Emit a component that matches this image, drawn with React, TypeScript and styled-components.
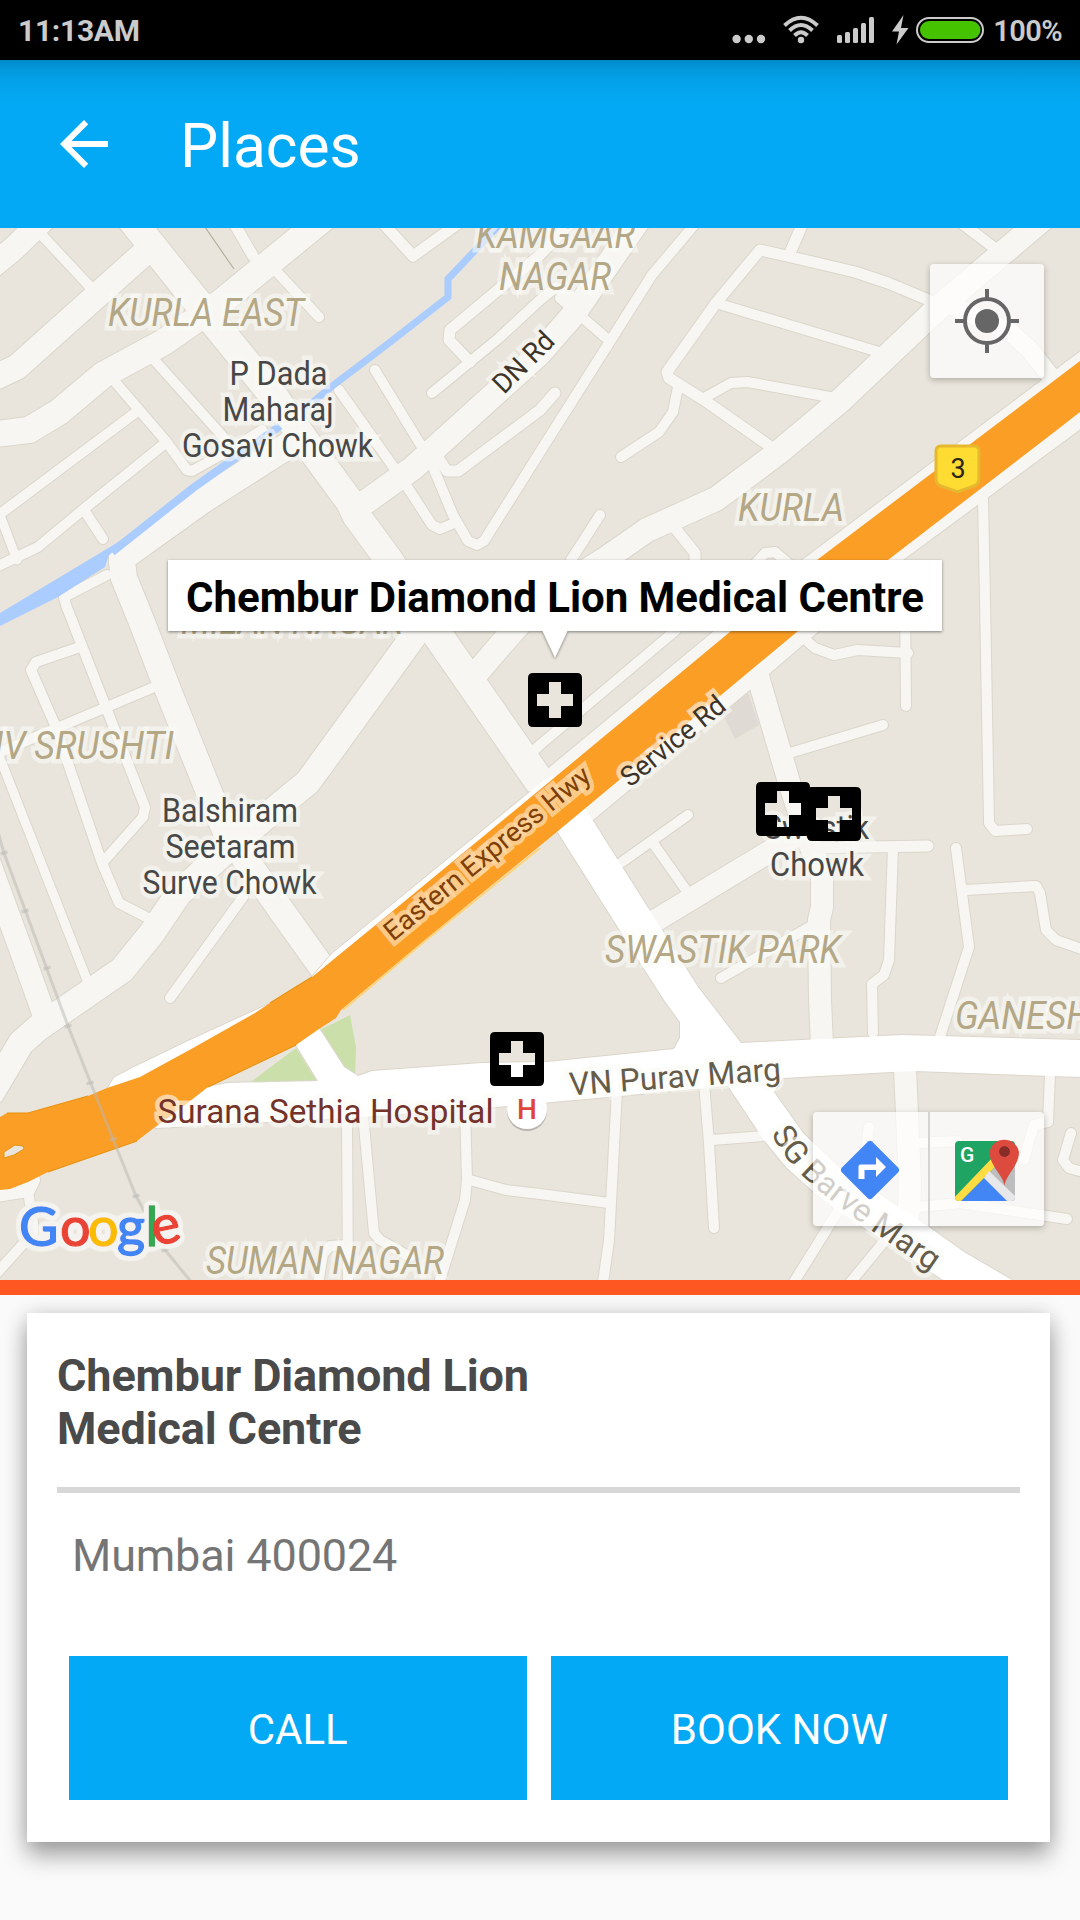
import React from "react";
import styled, { createGlobalStyle } from "styled-components";

const GlobalStyle = createGlobalStyle`
  html, body { margin: 0; padding: 0; }
  body { background: #fafafa; }
  *, *::before, *::after { box-sizing: border-box; }
`;

const Screen = styled.div`
  width: 1080px;
  height: 1920px;
  display: flex;
  flex-direction: column;
  background: #fafafa;
  font-family: Roboto, "Liberation Sans", sans-serif;
  overflow: hidden;
`;

/* ---------- status bar ---------- */

const StatusBar = styled.header`
  flex: none;
  height: 60px;
  padding: 0 18px;
  display: flex;
  align-items: center;
  justify-content: space-between;
  background: #000;
  color: #cbcbcb;
`;

const Clock = styled.span`
  padding-top: 1px;
  font-size: 30px;
  line-height: 36px;
  font-weight: 700;
  letter-spacing: -0.3px;
`;

const Indicators = styled.div`
  display: flex;
  align-items: center;
  height: 60px;
`;

const StatusIcons = styled.svg`
  display: block;
  width: 260px;
  height: 60px;
`;

const Percent = styled.span`
  padding-top: 1px;
  font-size: 29px;
  line-height: 34px;
  font-weight: 600;
  width: 72px;
  text-align: right;
  white-space: nowrap;
  letter-spacing: -0.6px;
`;

/* ---------- toolbar ---------- */

const Toolbar = styled.nav`
  flex: none;
  height: 168px;
  padding: 0 48px;
  display: flex;
  align-items: center;
  gap: 60px;
  background: linear-gradient(
      to bottom,
      rgba(0, 0, 0, 0.18) 0,
      rgba(0, 0, 0, 0.1) 9px,
      rgba(0, 0, 0, 0.04) 22px,
      rgba(0, 0, 0, 0) 44px
    ),
    #03a9f4;
`;

const BackButton = styled.button`
  width: 72px;
  height: 72px;
  padding: 0;
  border: 0;
  background: none;
  svg { display: block; }
`;

const Title = styled.h1`
  margin: 0;
  padding-top: 5px;
  color: #fff;
  font-size: 60.5px;
  line-height: 70px;
  font-weight: 400;
`;

/* ---------- map ---------- */

const MapArea = styled.section`
  position: relative;
  flex: none;
  height: 1052px;
  overflow: hidden;
  background: #e9e5dc;
`;

const MapDrawing = styled.svg`
  display: block;
  width: 1080px;
  height: 1052px;
  font-family: Roboto, "Liberation Sans", sans-serif;
`;

const Label = styled.text<{ $size: number; $color: string; $halo?: string; $italic?: boolean }>`
  font-size: ${(p) => p.$size}px;
  font-style: ${(p) => (p.$italic ? "italic" : "normal")};
  fill: ${(p) => p.$color};
  stroke: ${(p) => p.$halo ?? "rgba(250, 250, 246, 0.6)"};
  stroke-width: 9px;
  paint-order: stroke;
`;

const PlaceMarker = styled.svg<{ $x: number; $y: number }>`
  position: absolute;
  left: ${(p) => p.$x}px;
  top: ${(p) => p.$y}px;
  width: 54px;
  height: 54px;
`;

const Callout = styled.div`
  position: absolute;
  left: 168px;
  top: 332px;
  width: 774px;
  height: 71px;
  padding-top: 4px;
  display: flex;
  align-items: center;
  justify-content: center;
  background: #fff;
  filter: drop-shadow(0 1px 1.5px rgba(0, 0, 0, 0.45));
  color: #000;
  font-size: 42px;
  line-height: 50px;
  font-weight: 700;
  white-space: nowrap;
  letter-spacing: -0.03px;

  &::after {
    content: "";
    position: absolute;
    left: 374px;
    top: 70px;
    border: 13px solid transparent;
    border-top: 28px solid #fff;
    border-bottom: 0;
  }
`;

const Controls = styled.div<{ $top: number; $width: number }>`
  position: absolute;
  right: 36px;
  top: ${(p) => p.$top}px;
  width: ${(p) => p.$width}px;
  height: 114px;
  display: flex;
  border-radius: 4px;
  background: rgba(255, 255, 255, 0.7);
  box-shadow: 0 2px 6px rgba(0, 0, 0, 0.25);
`;

const ControlButton = styled.button`
  flex: 1;
  padding: 0;
  border: 0;
  background: none;
  & + & { border-left: 2px solid #d3d2d0; }
  svg { display: block; margin: auto; }
`;

/* ---------- details ---------- */

const Accent = styled.div`
  flex: none;
  height: 15px;
  background: #ff5722;
`;

const Details = styled.main`
  flex: 1;
  padding: 18px 30px 78px 27px;
  display: flex;
  overflow: hidden;
`;

const Card = styled.article`
  flex: 1;
  display: flex;
  flex-direction: column;
  padding: 36px 30px 42px;
  background: #fff;
  box-shadow: 0 14px 22px rgba(0, 0, 0, 0.32), 0 0 20px rgba(0, 0, 0, 0.14);
`;

const PlaceName = styled.h2`
  margin: 0;
  width: 500px;
  color: #4a4a4a;
  font-size: 45px;
  line-height: 53px;
  font-weight: 700;
  letter-spacing: -0.12px;
`;

const Divider = styled.hr`
  width: 963px;
  height: 6px;
  margin: 32px 0 0;
  border: 0;
  background: #d8d8d8;
`;

const Address = styled.p`
  margin: 36px 0 0 15px;
  color: #757575;
  font-size: 45px;
  line-height: 54px;
  letter-spacing: -0.15px;
`;

const Actions = styled.div`
  margin: auto 12px 0;
  display: flex;
  gap: 24px;
`;

const ActionButton = styled.button`
  flex: 1;
  height: 144px;
  padding: 4px 0 0;
  border: 0;
  background: #03a9f4;
  color: #fff;
  font-family: inherit;
  font-size: 42px;
  line-height: 50px;
  font-weight: 400;
`;

/* ---------- map data ---------- */

type Road = [width: number, d: string];

const roads: Road[] = [
  [24, "M-10 268L12 250L45 218"],
  [10, "M38 231L94 291"],
  [25, "M150 248L17 367L-4 377"],
  [28, "M130 218L215 324L275 398L306 442L350 502L356 515L389 560L439 637"],
  [30, "M430 622L439 637L535 775L560 810"],
  [26, "M323 219L220 303L164 342L103 375L59 412L29 430L-4 434"],
  [11, "M231 218L253 256"],
  [10, "M277 272L319 317"],
  [11, "M380 220L413 256L463 220"],
  [24, "M360 506L413 468L540 353L573 315L640 218"],
  [11, "M577 216L540 255L450 330L449 340L470 362"],
  [10, "M432 393L499 338L540 300L556 287L575 298"],
  [10, "M560 298L605 337"],
  [10, "M375 370L425 452"],
  [10, "M339 390L397 472"],
  [11, "M434 452L447 471L458 471L540 410L555 393"],
  [10, "M406 485L432 525L440 529L452 524"],
  [10, "M430 460L453 515L468 541L477 545L484 541L540 452L652 275L700 218"],
  [10, "M148 353L226 440"],
  [10, "M110 376L165 440L187 470L192 471L235 447L262 430"],
  [10, "M135 413L0 514"],
  [10, "M163 445L85 508L38 547L-4 567"],
  [10, "M86 513L103 539"],
  [9, "M0 515L17 560"],
  [26, "M300 438L203 500L122 558"],
  [26, "M122 562L124 578L143 625L168 690L207 787L225 830L281 910L326 973"],
  [10, "M107 575L64 597L66 605L107 710L145 807L143 817L103 862"],
  [10, "M77 648L36 662L31 670L55 725L102 863L119 903L148 918"],
  [10, "M152 688L52 730L-4 754"],
  [9, "M0 758L89 985"],
  [23, "M-12 860L21 950L46 1020"],
  [26, "M433 606L413 637L308 782L241 837L179 893L152 933L122 970L38 1028L21 1043L-8 1092"],
  [10, "M243 897L170 998"],
  [24, "M1044 218L939 307L841 400L779 452L716 499L647 530L604 560L540 600L505 640L475 675"],
  [11, "M716 303L667 372L669 378L704 400L771 447"],
  [11, "M716 303L760 250L791 257L855 272L888 283L936 303"],
  [11, "M805 218L790 253"],
  [10, "M716 303L879 352"],
  [10, "M704 398L731 383L748 382L835 398"],
  [10, "M678 387L673 412L659 432L621 457"],
  [11, "M955 218L997 250"],
  [18, "M955 307L1010 332L1030 350L1052 378"],
  [10, "M600 515L571 560"],
  [11, "M674 527L695 553L695 565"],
  [10, "M755 564L765 553L775 552L788 563"],
  [10, "M983 498L985 600L989 823L995 831L1027 829"],
  [22, "M753 655L759 680L789 782L809 843L822 873L822 907L819 920L820 1000L822 1045"],
  [10, "M793 752L883 725"],
  [11, "M809 848L928 846"],
  [22, "M653 922L807 829"],
  [10, "M622 862L688 815"],
  [10, "M653 843L686 890"],
  [10, "M813 925L721 978"],
  [10, "M893 847L889 960L884 975L872 984L873 1033"],
  [10, "M956 848L969 947L939 1040"],
  [10, "M965 890L1036 886L1040 893L1046 930L1056 940L1090 952"],
  [10, "M905 600L906 706"],
  [10, "M800 635L815 648L834 655L858 650L908 653"],
  [10, "M676 630L541 744L530 754"],
  [10, "M617 1090L611 1203L609 1240L602 1290"],
  [10, "M465 1108L467 1180L465 1200L437 1290"],
  [10, "M470 1180L506 1190L540 1194L609 1203"],
  [10, "M704 1083L709 1143L714 1228"],
  [10, "M712 1140L764 1136"],
  [22, "M905 1068L910 1183L909 1210L905 1228"],
  [10, "M919 1143L957 1141"],
  [10, "M919 1207L960 1203L1067 1219"],
  [10, "M869 1127L865 1155"],
  [10, "M1050 1075L1048 1122L1034 1125L1030 1138L1024 1160"],
  [10, "M1071 1133L1063 1160L1069 1168L1090 1174"],
  [10, "M840 1208L789 1290"],
  [10, "M887 1238L844 1290"],
  [10, "M347 1117L348 1290"],
  [10, "M363 1115L374 1233L380 1240L410 1257"],
  [10, "M348 1245L330 1246L323 1254L317 1290"],
  [14, "M33 1180L28 1190L-4 1195"],
  [10, "M27 1185L33 1223L33 1233L-4 1274"],
];

const highwaySides =
  "M1082 350L802 560L714 631L551 766L530 790L560 785L817 570L1082 380ZM1082 428L903 560L812 637L769 674L593 820L580 812L798 625L1082 400Z";
const highway =
  "M1080 361L817 560L731 631L560 773L400 905L312 977L294 988L270 1003L255 1013L193 1048L140 1077L107 1088L88 1096L28 1113L7 1113L0 1117L0 1190L10 1189L28 1182L48 1172L137 1141L155 1127L185 1105L208 1087L296 1045L319 1029L336 1018L341 1010L425 940L558 831L798 631L888 560L1053 433L1080 412Z";
const sideRoad =
  "M557 831L643 967L664 1000L680 1022L680 1038L674 1049L547 1062L482 1063L372 1071L358 1076L344 1067L319 1028L296 1045L318 1081L227 1083L208 1087L155 1128L362 1117L496 1107L728 1086L764 1140L786 1167L815 1193L834 1208L943 1280L1012 1280L964 1252L929 1227L840 1168L803 1133L774 1092L783 1078L891 1072L915 1071L1080 1077L1080 1040L902 1035L741 1043L698 987L684 965L662 930L585 808Z";

const railTicks: [number, number][] = [
  [4, 853], [25, 911], [47, 968], [68, 1026], [90, 1083], [113, 1139], [136, 1196], [165, 1250],
];

const tan = "#b3a785";
const ink = "#474747";

interface LabelSpec {
  text: string;
  x: number;
  y: number;
  length: number;
  size: number;
  color: string;
  italic?: boolean;
  angle?: number;
  halo?: string;
}

const labels: LabelSpec[] = [
  { text: "KURLA EAST", x: 108, y: 325.5, length: 196, size: 38, color: tan, italic: true },
  { text: "KAMGAAR", x: 476, y: 247.5, length: 159, size: 38, color: tan, italic: true },
  { text: "NAGAR", x: 499, y: 290, length: 112, size: 38, color: tan, italic: true },
  { text: "KURLA", x: 738, y: 520.5, length: 106, size: 38, color: tan, italic: true },
  { text: "MILAN NAGAR", x: 181, y: 634, length: 222, size: 38, color: tan, italic: true },
  { text: "IV SRUSHTI", x: -6, y: 758.5, length: 180, size: 38, color: tan, italic: true },
  { text: "SWASTIK PARK", x: 605, y: 963, length: 236, size: 38, color: tan, italic: true },
  { text: "GANESH", x: 955, y: 1029, length: 136, size: 38, color: tan, italic: true },
  { text: "SUMAN NAGAR", x: 206, y: 1273.5, length: 238, size: 38, color: tan, italic: true },
  { text: "P Dada", x: 229.5, y: 385, length: 98, size: 34, color: ink },
  { text: "Maharaj", x: 222.5, y: 421, length: 111, size: 34, color: ink },
  { text: "Gosavi Chowk", x: 182, y: 457, length: 191, size: 34, color: ink },
  { text: "Balshiram", x: 162, y: 822, length: 136, size: 34, color: ink },
  { text: "Seetaram", x: 165.5, y: 858, length: 130, size: 34, color: ink },
  { text: "Surve Chowk", x: 142.5, y: 894, length: 174, size: 34, color: ink },
  { text: "Swastik", x: 764, y: 839, length: 105, size: 34, color: ink },
  { text: "Chowk", x: 770, y: 876, length: 94, size: 34, color: ink },
  { text: "Surana Sethia Hospital", x: 157.5, y: 1122.5, length: 336, size: 34, color: "#73332b" },
  { text: "VN Purav Marg", x: 570, y: 1095.5, length: 212, size: 32, color: "#665c4a", angle: -4.2 },
  { text: "Service Rd", x: 630, y: 788, length: 126, size: 28, color: "#3d3328", angle: -39 },
  { text: "Eastern Express Hwy", x: 393, y: 942, length: 258, size: 27, color: "#7d3f05", angle: -39.3, halo: "rgba(253, 217, 170, 0.75)" },
  { text: "DN Rd", x: 504, y: 395, length: 74, size: 28, color: "#3d3328", angle: -45 },
];

const markers: [number, number][] = [
  [528, 445],
  [755.5, 554],
  [806.5, 559],
  [490, 804],
];

const CityMap = () => (
  <MapDrawing viewBox="0 228 1080 1052">
    <defs>
      <filter id="logo-halo" x="-10%" y="-20%" width="120%" height="140%">
        <feMorphology in="SourceAlpha" operator="dilate" radius="2" result="grown" />
        <feGaussianBlur in="grown" stdDeviation="2.500" result="soft" />
        <feComponentTransfer in="soft" result="mask">
          <feFuncA type="linear" slope="8" intercept="-0.600" />
        </feComponentTransfer>
        <feFlood floodColor="#f5f3ef" />
        <feComposite in2="mask" operator="in" result="halo" />
        <feMerge>
          <feMergeNode in="halo" />
          <feMergeNode in="SourceGraphic" />
        </feMerge>
      </filter>
    </defs>
    <path d="M722 713L748 692L759 725L735 739Z" fill="#dfdad3" />
    <path d="M350 1015L356 1047L355 1076L344 1067L320 1030ZM296 1048L248 1084L318 1083Z" fill="#cadfaa" />
    <path d="M205.600 228L234 269" stroke="#b5b09c" strokeWidth="1.200" />
    <g fill="none" stroke="#dbd6cb" strokeLinecap="round" strokeLinejoin="round">
      {roads.map(([w, d]) => <path key={d} d={d} strokeWidth={w + 2} />)}
      <path d={highwaySides} strokeWidth="2" />
      <path d={sideRoad} strokeWidth="2" />
    </g>
    <g fill="none" stroke="#f7f6f2" strokeLinecap="round" strokeLinejoin="round">
      {roads.map(([w, d]) => <path key={d} d={d} strokeWidth={w} />)}
    </g>
    <g fill="none" stroke="#aaccff">
      <path d="M500 224L448 279L448 297L389 343L331 387L306 408" strokeWidth="7" />
      <path d="M280 426L248 449L193 488L112 552" strokeWidth="8" />
      <path d="M120 541L0 613L0 626L58 597L105 567L109 555L120 546Z" fill="#aaccff" stroke="none" />
    </g>
    <path d={highwaySides} fill="#f7f6f2" />
    <path d={sideRoad} fill="#fff" />
    <path d="M400 898L530 792L545 779Q551 774 558 778L400 910L312 977L331 954ZM270 1003L189 1040L133 1067L114 1077L107 1089L140 1080L200 1050Z" fill="#fff" />
    <path d="M530 791L331 954L312 976M270 1003L189 1040L133 1067L114 1077L107 1088" fill="none" stroke="#dbd6cb" strokeWidth="1" />
    <path d={highway} fill="#fb9e25" />
    <path d="M540 848L425 941L343 1010" fill="none" stroke="#fdd47c" strokeWidth="2" />
    <path d="M312 977L294 988L270 1003M88 1096L28 1113L7 1113M48 1172L137 1141M208 1087L296 1045" fill="none" stroke="#e8920f" strokeWidth="1.200" />
    <path d="M4 1152L15 1145L23 1146L24 1149L14 1155L4 1158Z" fill="#e9e5dc" stroke="#e8920f" strokeWidth="1" />
    <g stroke="#b9b8b4" strokeOpacity="0.5" fill="none">
      <path d="M-2 832L4 853L68 1026L113 1139L136 1196L165 1250L193 1284" strokeWidth="3" />
      {railTicks.map(([x, y]) => <path key={y} d={`M${x - 3.5} ${y + 1}L${x + 3.5} ${y - 1}`} strokeWidth="3" />)}
    </g>

    {labels.map((l) => (
      <Label
        key={l.text + l.y}
        x={l.x}
        y={l.y}
        textLength={l.length}
        lengthAdjust="spacingAndGlyphs"
        transform={l.angle ? `rotate(${l.angle} ${l.x} ${l.y})` : undefined}
        $size={l.size}
        $color={l.color}
        $italic={l.italic}
        $halo={l.halo}
      >
        {l.text}
      </Label>
    ))}
    <path id="sg-road" d="M771 1133C784 1160 806 1182 840 1207L872 1231L970 1298" fill="none" />
    <Label $size={32} $color="#665c4a">
      <textPath href="#sg-road" textLength="214" lengthAdjust="spacingAndGlyphs">SG Barve Marg</textPath>
    </Label>

    <circle cx="527" cy="1111" r="20" fill="#b9b5ae" />
    <circle cx="527" cy="1109" r="20" fill="#fff" />
    <text x="527" y="1119" textAnchor="middle" fontSize="28" fontWeight="500" fill="#e0443a">H</text>

    <path d="M941 446H974Q979 446 979 451V479Q979 484 974 486L957.500 492L941 486Q936 484 936 479V451Q936 446 941 446Z" fill="#ffdc32" stroke="#e6b82f" strokeWidth="3" />
    <text x="958" y="478" textAnchor="middle" fontSize="27" fill="#2a2618">3</text>

    <text fontFamily="Lato, sans-serif" fontSize="54" strokeWidth="1.400" y="1246" x="19 60 88 117 145.500 155" filter="url(#logo-halo)">
      <tspan fill="#4285f4" stroke="#4285f4">G</tspan>
      <tspan fill="#ea4335" stroke="#ea4335">o</tspan>
      <tspan fill="#fbbc05" stroke="#fbbc05">o</tspan>
      <tspan fill="#4285f4" stroke="#4285f4">g</tspan>
      <tspan fill="#34a853" stroke="#34a853">l</tspan>
      <tspan fill="#ea4335" stroke="#ea4335" rotate="-12">e</tspan>
    </text>
  </MapDrawing>
);

const LocateIcon = () => (
  <svg width="66" height="66" viewBox="0 0 66 66" fill="none" stroke="#666" strokeWidth="4">
    <circle cx="33" cy="33" r="22" />
    <circle cx="33" cy="33" r="12" fill="#666" stroke="none" />
    <path d="M33 1V10M33 56V65M1 33H10M56 33H65" />
  </svg>
);

const DirectionsIcon = () => (
  <svg width="60" height="62" viewBox="0 -2 60 62">
    <path d="M28 1.500Q30 0 32 1.500L58.500 28Q60 30 58.500 32L32 58.500Q30 60 28 58.500L1.500 32Q0 30 1.500 28Z" fill="#4285f4" />
    <path d="M18.500 39V26.500Q18.500 24.500 20.500 24.500H36V17L46 27L36 37V30H24.500V39Z" fill="#fff" />
  </svg>
);

const MapsIcon = () => (
  <svg width="64" height="66" viewBox="2 1 64 66">
    <defs>
      <clipPath id="tile"><rect x="2" y="6" width="60" height="60" rx="4" /></clipPath>
    </defs>
    <g clipPath="url(#tile)">
      <rect x="2" y="6" width="60" height="60" fill="#1fa463" />
      <path d="M32 42L62 12V66H56Z" fill="#bdbdbd" />
      <path d="M32 42L7 67H57Z" fill="#4285f4" />
      <path d="M-1 65L41 21L45 29L6 68Z" fill="#ffdc42" />
      <path d="M31 43L36 36L65 64L61 67L55 67Z" fill="#e8e8ea" />
    </g>
    <text x="7" y="27" fontFamily="Roboto, sans-serif" fontSize="21" fontWeight="500" fill="#fff">G</text>
    <path d="M51.500 51C51 41 36.500 31 36.500 17A15 15 0 0 1 66 17C66 31 52 41 51.500 51Z" fill="#dd4b3e" />
    <circle cx="51.500" cy="16.500" r="5.400" fill="#862d27" />
  </svg>
);

const App = () => (
  <>
    <GlobalStyle />
    <Screen>
      <StatusBar>
        <Clock>11:13AM</Clock>
        <Indicators>
          <StatusIcons viewBox="730 0 260 60" fill="#cbcbcb">
            <circle cx="736.600" cy="39" r="4.200" />
            <circle cx="748.800" cy="39" r="4.200" />
            <circle cx="761" cy="39" r="4.200" />
            <g fill="none" stroke="#cbcbcb" strokeWidth="4">
              <path d="M784.500 25.500Q801 10 817.500 25.500" />
              <path d="M789.500 30.500Q801 19.500 812.500 30.500" />
              <path d="M794.500 35.500Q801 29 807.500 35.500" />
            </g>
            <circle cx="801" cy="40" r="3.200" />
            <rect x="837" y="35" width="5" height="8" rx="1.500" />
            <rect x="845" y="32" width="5" height="11" rx="1.500" />
            <rect x="853" y="28" width="5" height="15" rx="1.500" />
            <rect x="861" y="23" width="5" height="20" rx="1.500" />
            <rect x="869" y="17" width="5" height="26" rx="1.500" />
            <path d="M903.500 15L892 31.500H899L896.500 44.500L908.500 28H901Z" />
            <rect x="917" y="18" width="66" height="24" rx="12" fill="#000" stroke="#cbcbcb" strokeWidth="2" />
            <rect x="920" y="21" width="60.500" height="18" rx="9" fill="#46c300" />
          </StatusIcons>
          <Percent>100%</Percent>
        </Indicators>
      </StatusBar>

      <Toolbar>
        <BackButton aria-label="Back">
          <svg width="72" height="72" viewBox="0 0 24 24" fill="#fff">
            <path d="M20 11H7.830l5.590-5.590L12 4l-8 8 8 8 1.410-1.410L7.830 13H20v-2z" />
          </svg>
        </BackButton>
        <Title>Places</Title>
      </Toolbar>

      <MapArea>
        <CityMap />
        {markers.map(([x, y]) => (
          <PlaceMarker key={x} $x={x} $y={y} viewBox="0 0 54 54">
            <path
              fillRule="evenodd"
              d="M5 0H49Q54 0 54 5V49Q54 54 49 54H5Q0 54 0 49V5Q0 0 5 0ZM21 9V21H9V33H21V45H33V33H45V21H33V9Z"
            />
          </PlaceMarker>
        ))}
        <Callout>Chembur Diamond Lion Medical Centre</Callout>
        <Controls $top={36} $width={114}>
          <ControlButton aria-label="My location"><LocateIcon /></ControlButton>
        </Controls>
        <Controls $top={884} $width={231}>
          <ControlButton aria-label="Directions"><DirectionsIcon /></ControlButton>
          <ControlButton aria-label="Open map"><MapsIcon /></ControlButton>
        </Controls>
      </MapArea>
      <Accent />

      <Details>
        <Card>
          <PlaceName>Chembur Diamond Lion Medical Centre</PlaceName>
          <Divider />
          <Address>Mumbai 400024</Address>
          <Actions>
            <ActionButton>CALL</ActionButton>
            <ActionButton>BOOK NOW</ActionButton>
          </Actions>
        </Card>
      </Details>
    </Screen>
  </>
);

export default App;
